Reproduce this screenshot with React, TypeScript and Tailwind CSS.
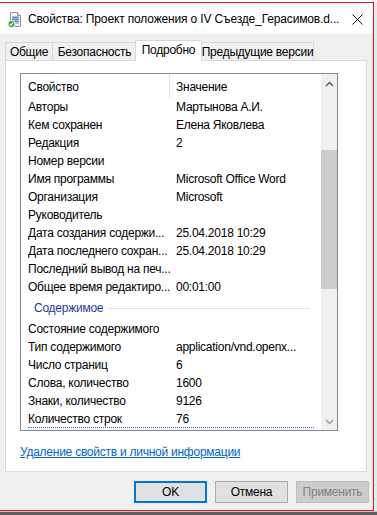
import React from 'react';

const font = { fontFamily: '"Liberation Sans", Arial, sans-serif' };

type Row = { label: string; value?: string };

const topRows: Row[] = [
  { label: 'Авторы', value: 'Мартынова А.И.' },
  { label: 'Кем сохранен', value: 'Елена Яковлева' },
  { label: 'Редакция', value: '2' },
  { label: 'Номер версии' },
  { label: 'Имя программы', value: 'Microsoft Office Word' },
  { label: 'Организация', value: 'Microsoft' },
  { label: 'Руководитель' },
  { label: 'Дата создания содержи...', value: '25.04.2018 10:29' },
  { label: 'Дата последнего сохран...', value: '25.04.2018 10:29' },
  { label: 'Последний вывод на печ...' },
  { label: 'Общее время редактиро...', value: '00:01:00' },
];

const contentRows: Row[] = [
  { label: 'Состояние содержимого' },
  { label: 'Тип содержимого', value: 'application/vnd.openx...' },
  { label: 'Число страниц', value: '6' },
  { label: 'Слова, количество', value: '1600' },
  { label: 'Знаки, количество', value: '9126' },
];

function DocIcon() {
  return (
    <svg width="16" height="17" viewBox="0 0 16 17">
      <path d="M3.5 1.5h7l3 3v11h-10z" fill="#f4f7fb" stroke="#8a96a8" />
      <path d="M10.5 1.5v3h3" fill="#dfe6ef" stroke="#8a96a8" />
      <rect x="5" y="5" width="7" height="8" fill="#a9c4e4" />
      <path d="M5.5 6.5h6M5.5 8.5h6M5.5 10.5h6" stroke="#5d7fb0" strokeWidth="1" />
      <circle cx="4.5" cy="13" r="3.5" fill="#3aa335" stroke="#ffffff" strokeWidth="0.8" />
      <path d="M2.8 13l1.2 1.2 2.3-2.5" fill="none" stroke="#ffffff" strokeWidth="1.2" />
    </svg>
  );
}

function ListRow({ row, last }: { row: Row; last?: boolean }) {
  return (
    <div
      className={`flex h-[18px] items-center shrink-0 ${
        last ? 'border-b border-dotted border-[#3366cc] mx-[7px] pl-0' : 'pl-[7px]'
      }`}
    >
      <div className="w-[148px] whitespace-nowrap overflow-hidden">{row.label}</div>
      <div className="whitespace-nowrap">{row.value}</div>
    </div>
  );
}

export default function App() {
  return (
    <div
      className="w-[377px] h-[515px] overflow-hidden bg-[#ececec] text-[12px] tracking-[-0.25px] text-black"
      style={font}
    >
      <div className="h-[2px] bg-white"></div>
      <div className="flex">
        <div className="w-[374px] flex flex-col border-t border-r border-b border-[#e81123] bg-[#f0f0f0]">
          <div className="h-[31px] bg-white flex items-center">
            <div className="ml-[7px] mr-[5px] mt-[1px]">
              <DocIcon />
            </div>
            <div className="text-[12px] tracking-[-0.15px] whitespace-nowrap">
              Свойства: Проект положения о IV Съезде_Герасимов.d...
            </div>
            <div className="ml-auto mr-[10px] mt-[1px]">
              <svg width="11" height="11" viewBox="0 0 11 11">
                <path d="M0.5 0.5l10 10M10.5 0.5l-10 10" stroke="#111" strokeWidth="1" />
              </svg>
            </div>
          </div>

          <div className="px-[5px] pt-[6px]">
            <div className="flex h-[20px] items-end whitespace-nowrap">
              <div className="h-[18px] flex items-center justify-center border border-b-0 border-[#d9d9d9] bg-[#f0f0f0] w-[48px]">
                Общие
              </div>
              <div className="h-[18px] flex items-center justify-center border border-b-0 border-l-0 border-[#d9d9d9] bg-[#f0f0f0] w-[84px]">
                Безопасность
              </div>
              <div className="relative z-10 h-[21px] -mb-px -ml-[2px] flex items-center justify-center border border-b-0 border-[#d9d9d9] bg-white w-[67px] pb-[2px]">
                Подробно
              </div>
              <div className="h-[18px] flex items-center justify-center border border-b-0 border-l-0 border-[#d9d9d9] bg-[#f0f0f0] w-[112px]">
                Предыдущие версии
              </div>
            </div>

            <div className="h-[412px] w-[362px] border border-[#d9d9d9] bg-white flex flex-col">
              <div className="mt-[12px] ml-[14px] w-[318px] h-[358px] border border-[#828790] flex">
                <div className="flex-1 flex flex-col overflow-hidden">
                  <div className="h-[24px] flex items-center shrink-0">
                    <div className="w-[148px] pl-[7px] h-full flex items-center pt-[2px]">Свойство</div>
                    <div className="w-px h-full bg-[#e5e5e5]"></div>
                    <div className="pl-[6px] pt-[2px]">Значение</div>
                  </div>
                  {topRows.map((r) => (
                    <ListRow key={r.label} row={r} />
                  ))}
                  <div className="h-[24px] flex items-center shrink-0 pl-[13px] pr-[11px]">
                    <span className="text-[#1e3b9e]">Содержимое</span>
                    <div className="flex-1 h-px bg-[#dbe4f1] ml-[6px]"></div>
                  </div>
                  {contentRows.map((r) => (
                    <ListRow key={r.label} row={r} />
                  ))}
                  <ListRow row={{ label: 'Количество строк', value: '76' }} last />
                </div>
                <div className="w-[16px] bg-[#f0f0f0] flex flex-col">
                  <div className="h-[17px] flex items-center justify-center shrink-0">
                    <svg width="9" height="6" viewBox="0 0 9 6" className="mt-[2px]">
                      <path d="M1 5l3.5-3.5L8 5" fill="none" stroke="#606060" strokeWidth="1.5" />
                    </svg>
                  </div>
                  <div className="h-[59px] shrink-0"></div>
                  <div className="h-[139px] shrink-0 bg-[#cdcdcd]"></div>
                  <div className="flex-1"></div>
                  <div className="h-[17px] flex items-center justify-center shrink-0">
                    <svg width="9" height="6" viewBox="0 0 9 6">
                      <path d="M1 1l3.5 3.5L8 1" fill="none" stroke="#a0a0a0" strokeWidth="1.5" />
                    </svg>
                  </div>
                </div>
              </div>
              <div className="mt-[12px] ml-[14px] text-[#0066cc] underline">
                Удаление свойств и личной информации
              </div>
            </div>

            <div className="flex justify-end gap-[8px] mt-[9px] mb-[7px] -mr-[1px]">
              <div className="w-[73px] h-[22px] border-2 border-[#0078d7] bg-[#e1e1e1] flex items-center justify-center">
                OK
              </div>
              <div className="w-[73px] h-[22px] border border-[#adadad] bg-[#e1e1e1] flex items-center justify-center">
                Отмена
              </div>
              <div className="w-[73px] h-[22px] border border-[#bfbfbf] bg-[#cccccc] text-[#838383] flex items-center justify-center">
                Применить
              </div>
            </div>
          </div>
        </div>
        <div className="flex-1 bg-[#e9e9e9]"></div>
      </div>
      <div className="h-px bg-[#c8c8c8]"></div>
      <div className="h-[4px] bg-[#5f5f5f]"></div>
    </div>
  );
}
